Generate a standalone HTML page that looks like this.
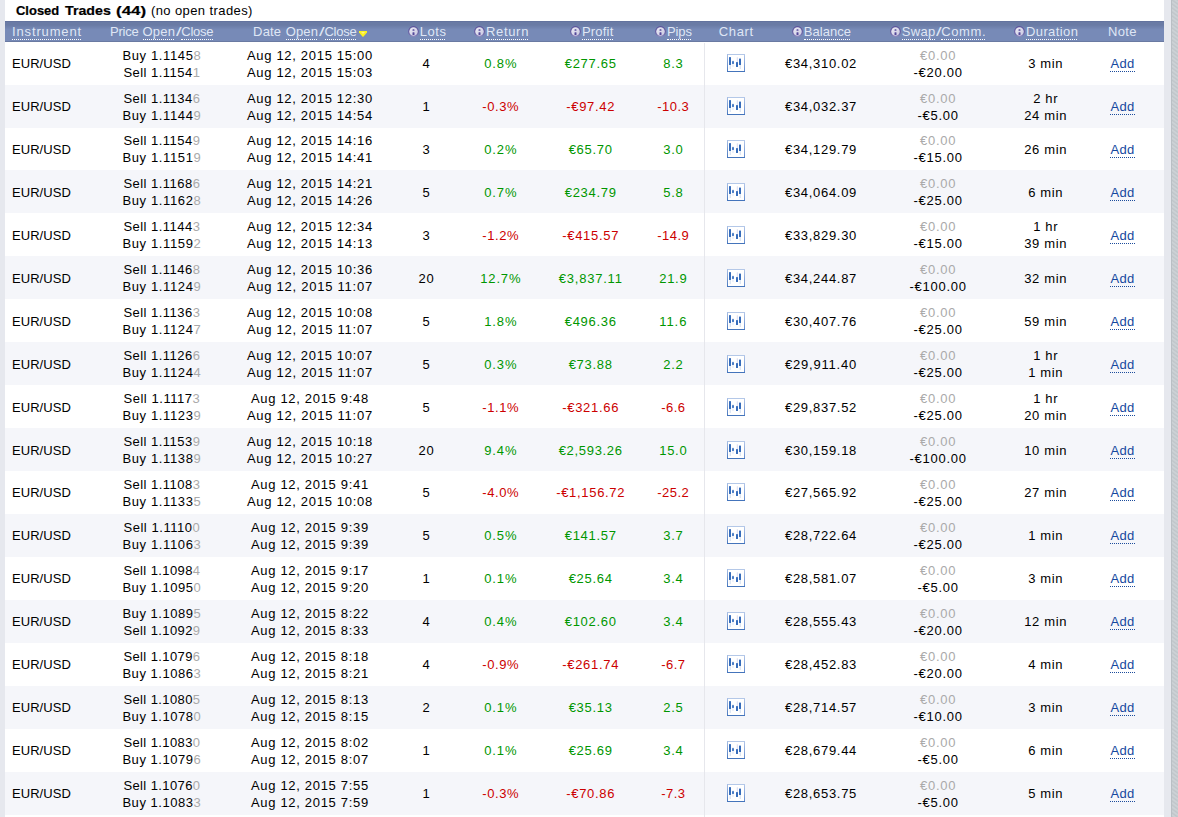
<!DOCTYPE html>
<html><head><meta charset="utf-8"><title>Closed Trades</title>
<style>
html,body{margin:0;padding:0;background:#fff;}
body{width:1178px;height:817px;overflow:hidden;font-family:"Liberation Sans",sans-serif;font-size:13px;color:#000;}
#page{position:relative;width:1178px;height:817px;overflow:hidden;background:#fff;}
.lband{position:absolute;left:0;top:0;width:5px;height:817px;background:#e6e8ee;}
.rband{position:absolute;left:1164px;top:0;width:7px;height:817px;background:#e6e8ee;}
.rhatch{position:absolute;left:1171px;top:0;width:7px;height:817px;background:repeating-linear-gradient(36deg,#bfc5c9 0,#cdd2d6 1.6px,#cdd2d6 2px,#bfc5c9 3.24px);border-left:1px solid #b9bfc4;box-sizing:border-box;}
.title{position:absolute;top:2px;line-height:17px;font-size:13px;white-space:nowrap;}
.title b{font-weight:bold;-webkit-text-stroke:.2px #000;display:inline-block;transform-origin:0 50%;}
.head{position:absolute;left:0;top:21px;width:1178px;height:21px;}
.head:before{content:"";position:absolute;left:5px;top:0;width:1159px;height:21px;background:linear-gradient(#63739e 0,#63739e 1px,#6a7ba5 1px,#6a7ba5 4px,#778ab7 8.5px,#778ab7 20px,#6a7aa2 20px,#6a7aa2 21px);}
.h{position:absolute;top:2px;height:17px;line-height:17px;color:#dfe6f5;white-space:nowrap;font-size:13px;}
.ul{position:absolute;top:18px;height:0;border-top:1px dotted #fff;}
.hic{position:absolute;top:5px;width:11px;height:11px;}
.inf{display:block;}
.arr{position:absolute;top:10px;width:8px;height:6px;}
.row{position:absolute;left:5px;width:1159px;height:43px;background:#fff;}
.row.alt{background:#f5f6fa;}
.c{position:absolute;top:0;height:43px;display:flex;align-items:center;justify-content:center;text-align:center;line-height:17px;white-space:nowrap;margin-left:-5px;}
.c.inst{left:12px;justify-content:flex-start;}
.c i{font-style:normal;color:#aaa;}
.grn{color:#009600;}
.red{color:#cc0000;}
.ci{display:block;}
.c.chart{display:block;}
.c.chart>div{position:absolute;left:11px;top:12px;}
.add{color:#15489e;border-bottom:1px dotted #1c4c9c;display:inline-block;line-height:15px;}
.vline{position:absolute;left:704px;top:43px;width:1px;height:774px;background:#e6e7ec;}
.row.r42,.row.r42 .c{height:42px;}
.row.dn .c.one{top:1px;}
.h.sl{transform:scaleX(1.55);transform-origin:50% 50%;}

</style></head><body>
<div id="page">
<div class="lband"></div><div class="rband"></div><div class="rhatch"></div>
<div class="title" style="left:15.8px"><b style="transform:scaleX(0.997)">Closed</b></div>
<div class="title" style="left:65.1px"><b style="transform:scaleX(1.093)">Trades</b></div>
<div class="title" style="left:115.5px"><b style="transform:scaleX(1.300)">(44)</b></div>
<div class="title" style="left:150.9px"><span style="letter-spacing:0.41px">(no open trades)</span></div>
<div class="head">
<div class="h u" style="left:12.0px;letter-spacing:0.86px">Instrument</div>
<div class="ul" style="left:12.1px;width:68.6px"></div>
<div class="h" style="left:110.0px;letter-spacing:-0.23px">Price</div>
<div class="h u" style="left:142.6px;letter-spacing:0.16px">Open</div>
<div class="ul" style="left:142.7px;width:31.7px"></div>
<div class="h sl" style="left:176.6px;letter-spacing:0.00px">/</div>
<div class="h u" style="left:181.3px;letter-spacing:-0.24px">Close</div>
<div class="ul" style="left:181.4px;width:31.7px"></div>
<div class="h" style="left:253.1px;letter-spacing:0.18px">Date</div>
<div class="h u" style="left:285.7px;letter-spacing:0.16px">Open</div>
<div class="ul" style="left:285.8px;width:31.7px"></div>
<div class="h sl" style="left:319.7px;letter-spacing:0.00px">/</div>
<div class="h u" style="left:324.4px;letter-spacing:-0.24px">Close</div>
<div class="ul" style="left:324.5px;width:31.7px"></div>
<svg class="arr" style="left:359px" viewBox="0 0 8 6"><polygon points="0,0 8,0 8,1.6 4.4,5.8 3.6,5.8 0,1.6" fill="#fbf31c"/><polygon points="2,1 6,1 4,3" fill="#fdf08a"/></svg>
<div class="hic" style="left:407.9px"><svg class="inf" viewBox="0 0 11 11" width="11" height="11"><defs><linearGradient id="ig" x1="0" y1="0" x2="1" y2="1"><stop offset="0" stop-color="#ececf5"/><stop offset="1" stop-color="#c9c7e0"/></linearGradient><linearGradient id="ir" x1="0" y1="0" x2="0" y2="1"><stop offset="0" stop-color="#5b519a"/><stop offset=".7" stop-color="#6a62a6"/><stop offset="1" stop-color="#8f8cc0"/></linearGradient></defs><circle cx="5.5" cy="5.5" r="5.4" fill="url(#ir)"/><circle cx="5.5" cy="5.5" r="4.25" fill="url(#ig)"/><rect x="4.5" y="6.2" width="2" height="2.8" rx=".5" fill="#55489a"/><rect x="4.5" y="3.2" width="2" height="1.6" rx=".6" fill="#55489a"/></svg></div>
<div class="h u" style="left:419.7px;letter-spacing:0.54px">Lots</div>
<div class="ul" style="left:419.8px;width:25.6px"></div>
<div class="hic" style="left:474.0px"><svg class="inf" viewBox="0 0 11 11" width="11" height="11"><defs><linearGradient id="ig" x1="0" y1="0" x2="1" y2="1"><stop offset="0" stop-color="#ececf5"/><stop offset="1" stop-color="#c9c7e0"/></linearGradient><linearGradient id="ir" x1="0" y1="0" x2="0" y2="1"><stop offset="0" stop-color="#5b519a"/><stop offset=".7" stop-color="#6a62a6"/><stop offset="1" stop-color="#8f8cc0"/></linearGradient></defs><circle cx="5.5" cy="5.5" r="5.4" fill="url(#ir)"/><circle cx="5.5" cy="5.5" r="4.25" fill="url(#ig)"/><rect x="4.5" y="6.2" width="2" height="2.8" rx=".5" fill="#55489a"/><rect x="4.5" y="3.2" width="2" height="1.6" rx=".6" fill="#55489a"/></svg></div>
<div class="h u" style="left:485.9px;letter-spacing:0.69px">Return</div>
<div class="ul" style="left:486.0px;width:41.9px"></div>
<div class="hic" style="left:570.0px"><svg class="inf" viewBox="0 0 11 11" width="11" height="11"><defs><linearGradient id="ig" x1="0" y1="0" x2="1" y2="1"><stop offset="0" stop-color="#ececf5"/><stop offset="1" stop-color="#c9c7e0"/></linearGradient><linearGradient id="ir" x1="0" y1="0" x2="0" y2="1"><stop offset="0" stop-color="#5b519a"/><stop offset=".7" stop-color="#6a62a6"/><stop offset="1" stop-color="#8f8cc0"/></linearGradient></defs><circle cx="5.5" cy="5.5" r="5.4" fill="url(#ir)"/><circle cx="5.5" cy="5.5" r="4.25" fill="url(#ig)"/><rect x="4.5" y="6.2" width="2" height="2.8" rx=".5" fill="#55489a"/><rect x="4.5" y="3.2" width="2" height="1.6" rx=".6" fill="#55489a"/></svg></div>
<div class="h u" style="left:581.9px;letter-spacing:0.21px">Profit</div>
<div class="ul" style="left:582.0px;width:30.8px"></div>
<div class="hic" style="left:655.0px"><svg class="inf" viewBox="0 0 11 11" width="11" height="11"><defs><linearGradient id="ig" x1="0" y1="0" x2="1" y2="1"><stop offset="0" stop-color="#ececf5"/><stop offset="1" stop-color="#c9c7e0"/></linearGradient><linearGradient id="ir" x1="0" y1="0" x2="0" y2="1"><stop offset="0" stop-color="#5b519a"/><stop offset=".7" stop-color="#6a62a6"/><stop offset="1" stop-color="#8f8cc0"/></linearGradient></defs><circle cx="5.5" cy="5.5" r="5.4" fill="url(#ir)"/><circle cx="5.5" cy="5.5" r="4.25" fill="url(#ig)"/><rect x="4.5" y="6.2" width="2" height="2.8" rx=".5" fill="#55489a"/><rect x="4.5" y="3.2" width="2" height="1.6" rx=".6" fill="#55489a"/></svg></div>
<div class="h u" style="left:666.9px;letter-spacing:-0.10px">Pips</div>
<div class="ul" style="left:667.0px;width:24.4px"></div>
<div class="h" style="left:718.8px;letter-spacing:0.63px">Chart</div>
<div class="hic" style="left:791.9px"><svg class="inf" viewBox="0 0 11 11" width="11" height="11"><defs><linearGradient id="ig" x1="0" y1="0" x2="1" y2="1"><stop offset="0" stop-color="#ececf5"/><stop offset="1" stop-color="#c9c7e0"/></linearGradient><linearGradient id="ir" x1="0" y1="0" x2="0" y2="1"><stop offset="0" stop-color="#5b519a"/><stop offset=".7" stop-color="#6a62a6"/><stop offset="1" stop-color="#8f8cc0"/></linearGradient></defs><circle cx="5.5" cy="5.5" r="5.4" fill="url(#ir)"/><circle cx="5.5" cy="5.5" r="4.25" fill="url(#ig)"/><rect x="4.5" y="6.2" width="2" height="2.8" rx=".5" fill="#55489a"/><rect x="4.5" y="3.2" width="2" height="1.6" rx=".6" fill="#55489a"/></svg></div>
<div class="h u" style="left:803.8px;letter-spacing:0.02px">Balance</div>
<div class="ul" style="left:803.9px;width:46.5px"></div>
<div class="hic" style="left:889.9px"><svg class="inf" viewBox="0 0 11 11" width="11" height="11"><defs><linearGradient id="ig" x1="0" y1="0" x2="1" y2="1"><stop offset="0" stop-color="#ececf5"/><stop offset="1" stop-color="#c9c7e0"/></linearGradient><linearGradient id="ir" x1="0" y1="0" x2="0" y2="1"><stop offset="0" stop-color="#5b519a"/><stop offset=".7" stop-color="#6a62a6"/><stop offset="1" stop-color="#8f8cc0"/></linearGradient></defs><circle cx="5.5" cy="5.5" r="5.4" fill="url(#ir)"/><circle cx="5.5" cy="5.5" r="4.25" fill="url(#ig)"/><rect x="4.5" y="6.2" width="2" height="2.8" rx=".5" fill="#55489a"/><rect x="4.5" y="3.2" width="2" height="1.6" rx=".6" fill="#55489a"/></svg></div>
<div class="h u" style="left:901.8px;letter-spacing:0.29px">Swap</div>
<div class="ul" style="left:901.9px;width:32.8px"></div>
<div class="h sl" style="left:936.7px;letter-spacing:0.00px">/</div>
<div class="h u" style="left:941.3px;letter-spacing:0.58px">Comm.</div>
<div class="ul" style="left:941.4px;width:43.6px"></div>
<div class="hic" style="left:1014.1px"><svg class="inf" viewBox="0 0 11 11" width="11" height="11"><defs><linearGradient id="ig" x1="0" y1="0" x2="1" y2="1"><stop offset="0" stop-color="#ececf5"/><stop offset="1" stop-color="#c9c7e0"/></linearGradient><linearGradient id="ir" x1="0" y1="0" x2="0" y2="1"><stop offset="0" stop-color="#5b519a"/><stop offset=".7" stop-color="#6a62a6"/><stop offset="1" stop-color="#8f8cc0"/></linearGradient></defs><circle cx="5.5" cy="5.5" r="5.4" fill="url(#ir)"/><circle cx="5.5" cy="5.5" r="4.25" fill="url(#ig)"/><rect x="4.5" y="6.2" width="2" height="2.8" rx=".5" fill="#55489a"/><rect x="4.5" y="3.2" width="2" height="1.6" rx=".6" fill="#55489a"/></svg></div>
<div class="h u" style="left:1026.0px;letter-spacing:0.39px">Duration</div>
<div class="ul" style="left:1026.1px;width:51.3px"></div>
<div class="h" style="left:1107.9px;letter-spacing:0.41px">Note</div>
</div>
<div class="row" style="top:42px">
<div class="c inst one"><div><span style="letter-spacing:0.05px">EUR/USD</span></div></div>
<div class="c price" style="left:81.9px;width:160px"><div><span style="letter-spacing:0.63px">Buy 1.1145<i>8</i></span><br><span style="letter-spacing:0.47px">Sell 1.1154<i>1</i></span></div></div>
<div class="c date" style="left:229.9px;width:160px"><div><span style="letter-spacing:0.69px">Aug 12, 2015 15:00</span><br><span style="letter-spacing:0.69px">Aug 12, 2015 15:03</span></div></div>
<div class="c num one" style="left:346.4px;width:160px"><div><span style="letter-spacing:0.77px">4</span></div></div>
<div class="c grn one" style="left:420.8px;width:160px"><div><span style="letter-spacing:0.84px">0.8%</span></div></div>
<div class="c grn one" style="left:510.7px;width:160px"><div><span style="letter-spacing:0.71px">€277.65</span></div></div>
<div class="c grn one" style="left:593.3px;width:160px"><div><span style="letter-spacing:0.64px">8.3</span></div></div>
<div class="c chart one" style="left:716.0px;width:40px"><div><svg class="ci" viewBox="0 0 18 18" width="18" height="18"><defs><linearGradient id="cl" x1="0" y1="0" x2="0" y2="1"><stop offset="0" stop-color="#a9c0e6"/><stop offset="1" stop-color="#4676bd"/></linearGradient><linearGradient id="cr" x1="0" y1="0" x2="0" y2="1"><stop offset="0" stop-color="#b6c9ea"/><stop offset="1" stop-color="#5f88cc"/></linearGradient></defs><rect x="0" y="0" width="18" height="18" fill="#fff"/><rect x="0" y="0" width="18" height="1" fill="#b4c8e8"/><rect x="0" y="0" width="1" height="18" fill="url(#cl)"/><rect x="17" y="0" width="1" height="18" fill="url(#cr)"/><rect x="0" y="17" width="18" height="1" fill="#4474bb"/><rect x="2.7" y="10" width="1" height="5" fill="#cfdcf0"/><rect x="2" y="3" width="2" height="8" rx=".6" fill="#366cbb"/><rect x="5.5" y="6" width="1" height="7" fill="#dde6f5"/><rect x="5" y="7" width="2" height="3" rx=".4" fill="#4a7cc4"/><rect x="9.8" y="3.3" width="1" height="5" fill="#d6d9f0"/><rect x="9" y="8" width="2" height="5" rx=".5" fill="#366cbb"/><rect x="12.7" y="10" width="1" height="5" fill="#cfdcf0"/><rect x="12" y="4.5" width="2" height="6.5" rx=".6" fill="#366cbb"/></svg></div></div>
<div class="c num one" style="left:741.0px;width:160px"><div><span style="letter-spacing:0.69px">€34,310.02</span></div></div>
<div class="c num" style="left:858.1px;width:160px"><div><i><span style="letter-spacing:0.69px">€0.00</span></i><br><span style="letter-spacing:0.70px">-€20.00</span></div></div>
<div class="c dur one" style="left:965.7px;width:160px"><div><span style="letter-spacing:0.64px">3 min</span></div></div>
<div class="c note one" style="left:1092.5px;width:60px"><div><span class="add"><span style="letter-spacing:0.29px">Add</span></span></div></div>
</div>
<div class="row alt" style="top:85px">
<div class="c inst one"><div><span style="letter-spacing:0.05px">EUR/USD</span></div></div>
<div class="c price" style="left:81.9px;width:160px"><div><span style="letter-spacing:0.47px">Sell 1.1134<i>6</i></span><br><span style="letter-spacing:0.63px">Buy 1.1144<i>9</i></span></div></div>
<div class="c date" style="left:229.9px;width:160px"><div><span style="letter-spacing:0.69px">Aug 12, 2015 12:30</span><br><span style="letter-spacing:0.69px">Aug 12, 2015 14:54</span></div></div>
<div class="c num one" style="left:346.4px;width:160px"><div><span style="letter-spacing:0.77px">1</span></div></div>
<div class="c red one" style="left:420.8px;width:160px"><div><span style="letter-spacing:0.61px">-0.3%</span></div></div>
<div class="c red one" style="left:510.7px;width:160px"><div><span style="letter-spacing:0.70px">-€97.42</span></div></div>
<div class="c red one" style="left:593.3px;width:160px"><div><span style="letter-spacing:0.47px">-10.3</span></div></div>
<div class="c chart one" style="left:716.0px;width:40px"><div><svg class="ci" viewBox="0 0 18 18" width="18" height="18"><defs><linearGradient id="cl" x1="0" y1="0" x2="0" y2="1"><stop offset="0" stop-color="#a9c0e6"/><stop offset="1" stop-color="#4676bd"/></linearGradient><linearGradient id="cr" x1="0" y1="0" x2="0" y2="1"><stop offset="0" stop-color="#b6c9ea"/><stop offset="1" stop-color="#5f88cc"/></linearGradient></defs><rect x="0" y="0" width="18" height="18" fill="#fff"/><rect x="0" y="0" width="18" height="1" fill="#b4c8e8"/><rect x="0" y="0" width="1" height="18" fill="url(#cl)"/><rect x="17" y="0" width="1" height="18" fill="url(#cr)"/><rect x="0" y="17" width="18" height="1" fill="#4474bb"/><rect x="2.7" y="10" width="1" height="5" fill="#cfdcf0"/><rect x="2" y="3" width="2" height="8" rx=".6" fill="#366cbb"/><rect x="5.5" y="6" width="1" height="7" fill="#dde6f5"/><rect x="5" y="7" width="2" height="3" rx=".4" fill="#4a7cc4"/><rect x="9.8" y="3.3" width="1" height="5" fill="#d6d9f0"/><rect x="9" y="8" width="2" height="5" rx=".5" fill="#366cbb"/><rect x="12.7" y="10" width="1" height="5" fill="#cfdcf0"/><rect x="12" y="4.5" width="2" height="6.5" rx=".6" fill="#366cbb"/></svg></div></div>
<div class="c num one" style="left:741.0px;width:160px"><div><span style="letter-spacing:0.69px">€34,032.37</span></div></div>
<div class="c num" style="left:858.1px;width:160px"><div><i><span style="letter-spacing:0.69px">€0.00</span></i><br><span style="letter-spacing:0.69px">-€5.00</span></div></div>
<div class="c dur" style="left:965.7px;width:160px"><div><span style="letter-spacing:0.65px">2 hr</span><br><span style="letter-spacing:0.66px">24 min</span></div></div>
<div class="c note one" style="left:1092.5px;width:60px"><div><span class="add"><span style="letter-spacing:0.29px">Add</span></span></div></div>
</div>
<div class="row r42" style="top:128px">
<div class="c inst one"><div><span style="letter-spacing:0.05px">EUR/USD</span></div></div>
<div class="c price" style="left:81.9px;width:160px"><div><span style="letter-spacing:0.47px">Sell 1.1154<i>9</i></span><br><span style="letter-spacing:0.63px">Buy 1.1151<i>9</i></span></div></div>
<div class="c date" style="left:229.9px;width:160px"><div><span style="letter-spacing:0.69px">Aug 12, 2015 14:16</span><br><span style="letter-spacing:0.69px">Aug 12, 2015 14:41</span></div></div>
<div class="c num one" style="left:346.4px;width:160px"><div><span style="letter-spacing:0.77px">3</span></div></div>
<div class="c grn one" style="left:420.8px;width:160px"><div><span style="letter-spacing:0.84px">0.2%</span></div></div>
<div class="c grn one" style="left:510.7px;width:160px"><div><span style="letter-spacing:0.71px">€65.70</span></div></div>
<div class="c grn one" style="left:593.3px;width:160px"><div><span style="letter-spacing:0.64px">3.0</span></div></div>
<div class="c chart one" style="left:716.0px;width:40px"><div><svg class="ci" viewBox="0 0 18 18" width="18" height="18"><defs><linearGradient id="cl" x1="0" y1="0" x2="0" y2="1"><stop offset="0" stop-color="#a9c0e6"/><stop offset="1" stop-color="#4676bd"/></linearGradient><linearGradient id="cr" x1="0" y1="0" x2="0" y2="1"><stop offset="0" stop-color="#b6c9ea"/><stop offset="1" stop-color="#5f88cc"/></linearGradient></defs><rect x="0" y="0" width="18" height="18" fill="#fff"/><rect x="0" y="0" width="18" height="1" fill="#b4c8e8"/><rect x="0" y="0" width="1" height="18" fill="url(#cl)"/><rect x="17" y="0" width="1" height="18" fill="url(#cr)"/><rect x="0" y="17" width="18" height="1" fill="#4474bb"/><rect x="2.7" y="10" width="1" height="5" fill="#cfdcf0"/><rect x="2" y="3" width="2" height="8" rx=".6" fill="#366cbb"/><rect x="5.5" y="6" width="1" height="7" fill="#dde6f5"/><rect x="5" y="7" width="2" height="3" rx=".4" fill="#4a7cc4"/><rect x="9.8" y="3.3" width="1" height="5" fill="#d6d9f0"/><rect x="9" y="8" width="2" height="5" rx=".5" fill="#366cbb"/><rect x="12.7" y="10" width="1" height="5" fill="#cfdcf0"/><rect x="12" y="4.5" width="2" height="6.5" rx=".6" fill="#366cbb"/></svg></div></div>
<div class="c num one" style="left:741.0px;width:160px"><div><span style="letter-spacing:0.69px">€34,129.79</span></div></div>
<div class="c num" style="left:858.1px;width:160px"><div><i><span style="letter-spacing:0.69px">€0.00</span></i><br><span style="letter-spacing:0.70px">-€15.00</span></div></div>
<div class="c dur one" style="left:965.7px;width:160px"><div><span style="letter-spacing:0.66px">26 min</span></div></div>
<div class="c note one" style="left:1092.5px;width:60px"><div><span class="add"><span style="letter-spacing:0.29px">Add</span></span></div></div>
</div>
<div class="row alt dn" style="top:170px">
<div class="c inst one"><div><span style="letter-spacing:0.05px">EUR/USD</span></div></div>
<div class="c price" style="left:81.9px;width:160px"><div><span style="letter-spacing:0.47px">Sell 1.1168<i>6</i></span><br><span style="letter-spacing:0.63px">Buy 1.1162<i>8</i></span></div></div>
<div class="c date" style="left:229.9px;width:160px"><div><span style="letter-spacing:0.69px">Aug 12, 2015 14:21</span><br><span style="letter-spacing:0.69px">Aug 12, 2015 14:26</span></div></div>
<div class="c num one" style="left:346.4px;width:160px"><div><span style="letter-spacing:0.77px">5</span></div></div>
<div class="c grn one" style="left:420.8px;width:160px"><div><span style="letter-spacing:0.84px">0.7%</span></div></div>
<div class="c grn one" style="left:510.7px;width:160px"><div><span style="letter-spacing:0.71px">€234.79</span></div></div>
<div class="c grn one" style="left:593.3px;width:160px"><div><span style="letter-spacing:0.64px">5.8</span></div></div>
<div class="c chart one" style="left:716.0px;width:40px"><div><svg class="ci" viewBox="0 0 18 18" width="18" height="18"><defs><linearGradient id="cl" x1="0" y1="0" x2="0" y2="1"><stop offset="0" stop-color="#a9c0e6"/><stop offset="1" stop-color="#4676bd"/></linearGradient><linearGradient id="cr" x1="0" y1="0" x2="0" y2="1"><stop offset="0" stop-color="#b6c9ea"/><stop offset="1" stop-color="#5f88cc"/></linearGradient></defs><rect x="0" y="0" width="18" height="18" fill="#fff"/><rect x="0" y="0" width="18" height="1" fill="#b4c8e8"/><rect x="0" y="0" width="1" height="18" fill="url(#cl)"/><rect x="17" y="0" width="1" height="18" fill="url(#cr)"/><rect x="0" y="17" width="18" height="1" fill="#4474bb"/><rect x="2.7" y="10" width="1" height="5" fill="#cfdcf0"/><rect x="2" y="3" width="2" height="8" rx=".6" fill="#366cbb"/><rect x="5.5" y="6" width="1" height="7" fill="#dde6f5"/><rect x="5" y="7" width="2" height="3" rx=".4" fill="#4a7cc4"/><rect x="9.8" y="3.3" width="1" height="5" fill="#d6d9f0"/><rect x="9" y="8" width="2" height="5" rx=".5" fill="#366cbb"/><rect x="12.7" y="10" width="1" height="5" fill="#cfdcf0"/><rect x="12" y="4.5" width="2" height="6.5" rx=".6" fill="#366cbb"/></svg></div></div>
<div class="c num one" style="left:741.0px;width:160px"><div><span style="letter-spacing:0.69px">€34,064.09</span></div></div>
<div class="c num" style="left:858.1px;width:160px"><div><i><span style="letter-spacing:0.69px">€0.00</span></i><br><span style="letter-spacing:0.70px">-€25.00</span></div></div>
<div class="c dur one" style="left:965.7px;width:160px"><div><span style="letter-spacing:0.64px">6 min</span></div></div>
<div class="c note one" style="left:1092.5px;width:60px"><div><span class="add"><span style="letter-spacing:0.29px">Add</span></span></div></div>
</div>
<div class="row dn" style="top:213px">
<div class="c inst one"><div><span style="letter-spacing:0.05px">EUR/USD</span></div></div>
<div class="c price" style="left:81.9px;width:160px"><div><span style="letter-spacing:0.47px">Sell 1.1144<i>3</i></span><br><span style="letter-spacing:0.63px">Buy 1.1159<i>2</i></span></div></div>
<div class="c date" style="left:229.9px;width:160px"><div><span style="letter-spacing:0.69px">Aug 12, 2015 12:34</span><br><span style="letter-spacing:0.69px">Aug 12, 2015 14:13</span></div></div>
<div class="c num one" style="left:346.4px;width:160px"><div><span style="letter-spacing:0.77px">3</span></div></div>
<div class="c red one" style="left:420.8px;width:160px"><div><span style="letter-spacing:0.61px">-1.2%</span></div></div>
<div class="c red one" style="left:510.7px;width:160px"><div><span style="letter-spacing:0.71px">-€415.57</span></div></div>
<div class="c red one" style="left:593.3px;width:160px"><div><span style="letter-spacing:0.47px">-14.9</span></div></div>
<div class="c chart one" style="left:716.0px;width:40px"><div><svg class="ci" viewBox="0 0 18 18" width="18" height="18"><defs><linearGradient id="cl" x1="0" y1="0" x2="0" y2="1"><stop offset="0" stop-color="#a9c0e6"/><stop offset="1" stop-color="#4676bd"/></linearGradient><linearGradient id="cr" x1="0" y1="0" x2="0" y2="1"><stop offset="0" stop-color="#b6c9ea"/><stop offset="1" stop-color="#5f88cc"/></linearGradient></defs><rect x="0" y="0" width="18" height="18" fill="#fff"/><rect x="0" y="0" width="18" height="1" fill="#b4c8e8"/><rect x="0" y="0" width="1" height="18" fill="url(#cl)"/><rect x="17" y="0" width="1" height="18" fill="url(#cr)"/><rect x="0" y="17" width="18" height="1" fill="#4474bb"/><rect x="2.7" y="10" width="1" height="5" fill="#cfdcf0"/><rect x="2" y="3" width="2" height="8" rx=".6" fill="#366cbb"/><rect x="5.5" y="6" width="1" height="7" fill="#dde6f5"/><rect x="5" y="7" width="2" height="3" rx=".4" fill="#4a7cc4"/><rect x="9.8" y="3.3" width="1" height="5" fill="#d6d9f0"/><rect x="9" y="8" width="2" height="5" rx=".5" fill="#366cbb"/><rect x="12.7" y="10" width="1" height="5" fill="#cfdcf0"/><rect x="12" y="4.5" width="2" height="6.5" rx=".6" fill="#366cbb"/></svg></div></div>
<div class="c num one" style="left:741.0px;width:160px"><div><span style="letter-spacing:0.69px">€33,829.30</span></div></div>
<div class="c num" style="left:858.1px;width:160px"><div><i><span style="letter-spacing:0.69px">€0.00</span></i><br><span style="letter-spacing:0.70px">-€15.00</span></div></div>
<div class="c dur" style="left:965.7px;width:160px"><div><span style="letter-spacing:0.65px">1 hr</span><br><span style="letter-spacing:0.66px">39 min</span></div></div>
<div class="c note one" style="left:1092.5px;width:60px"><div><span class="add"><span style="letter-spacing:0.29px">Add</span></span></div></div>
</div>
<div class="row alt dn" style="top:256px">
<div class="c inst one"><div><span style="letter-spacing:0.05px">EUR/USD</span></div></div>
<div class="c price" style="left:81.9px;width:160px"><div><span style="letter-spacing:0.47px">Sell 1.1146<i>8</i></span><br><span style="letter-spacing:0.63px">Buy 1.1124<i>9</i></span></div></div>
<div class="c date" style="left:229.9px;width:160px"><div><span style="letter-spacing:0.69px">Aug 12, 2015 10:36</span><br><span style="letter-spacing:0.75px">Aug 12, 2015 11:07</span></div></div>
<div class="c num one" style="left:346.4px;width:160px"><div><span style="letter-spacing:0.77px">20</span></div></div>
<div class="c grn one" style="left:420.8px;width:160px"><div><span style="letter-spacing:0.82px">12.7%</span></div></div>
<div class="c grn one" style="left:510.7px;width:160px"><div><span style="letter-spacing:0.79px">€3,837.11</span></div></div>
<div class="c grn one" style="left:593.3px;width:160px"><div><span style="letter-spacing:0.67px">21.9</span></div></div>
<div class="c chart one" style="left:716.0px;width:40px"><div><svg class="ci" viewBox="0 0 18 18" width="18" height="18"><defs><linearGradient id="cl" x1="0" y1="0" x2="0" y2="1"><stop offset="0" stop-color="#a9c0e6"/><stop offset="1" stop-color="#4676bd"/></linearGradient><linearGradient id="cr" x1="0" y1="0" x2="0" y2="1"><stop offset="0" stop-color="#b6c9ea"/><stop offset="1" stop-color="#5f88cc"/></linearGradient></defs><rect x="0" y="0" width="18" height="18" fill="#fff"/><rect x="0" y="0" width="18" height="1" fill="#b4c8e8"/><rect x="0" y="0" width="1" height="18" fill="url(#cl)"/><rect x="17" y="0" width="1" height="18" fill="url(#cr)"/><rect x="0" y="17" width="18" height="1" fill="#4474bb"/><rect x="2.7" y="10" width="1" height="5" fill="#cfdcf0"/><rect x="2" y="3" width="2" height="8" rx=".6" fill="#366cbb"/><rect x="5.5" y="6" width="1" height="7" fill="#dde6f5"/><rect x="5" y="7" width="2" height="3" rx=".4" fill="#4a7cc4"/><rect x="9.8" y="3.3" width="1" height="5" fill="#d6d9f0"/><rect x="9" y="8" width="2" height="5" rx=".5" fill="#366cbb"/><rect x="12.7" y="10" width="1" height="5" fill="#cfdcf0"/><rect x="12" y="4.5" width="2" height="6.5" rx=".6" fill="#366cbb"/></svg></div></div>
<div class="c num one" style="left:741.0px;width:160px"><div><span style="letter-spacing:0.69px">€34,244.87</span></div></div>
<div class="c num" style="left:858.1px;width:160px"><div><i><span style="letter-spacing:0.69px">€0.00</span></i><br><span style="letter-spacing:0.71px">-€100.00</span></div></div>
<div class="c dur one" style="left:965.7px;width:160px"><div><span style="letter-spacing:0.66px">32 min</span></div></div>
<div class="c note one" style="left:1092.5px;width:60px"><div><span class="add"><span style="letter-spacing:0.29px">Add</span></span></div></div>
</div>
<div class="row dn" style="top:299px">
<div class="c inst one"><div><span style="letter-spacing:0.05px">EUR/USD</span></div></div>
<div class="c price" style="left:81.9px;width:160px"><div><span style="letter-spacing:0.47px">Sell 1.1136<i>3</i></span><br><span style="letter-spacing:0.63px">Buy 1.1124<i>7</i></span></div></div>
<div class="c date" style="left:229.9px;width:160px"><div><span style="letter-spacing:0.69px">Aug 12, 2015 10:08</span><br><span style="letter-spacing:0.75px">Aug 12, 2015 11:07</span></div></div>
<div class="c num one" style="left:346.4px;width:160px"><div><span style="letter-spacing:0.77px">5</span></div></div>
<div class="c grn one" style="left:420.8px;width:160px"><div><span style="letter-spacing:0.84px">1.8%</span></div></div>
<div class="c grn one" style="left:510.7px;width:160px"><div><span style="letter-spacing:0.71px">€496.36</span></div></div>
<div class="c grn one" style="left:593.3px;width:160px"><div><span style="letter-spacing:0.91px">11.6</span></div></div>
<div class="c chart one" style="left:716.0px;width:40px"><div><svg class="ci" viewBox="0 0 18 18" width="18" height="18"><defs><linearGradient id="cl" x1="0" y1="0" x2="0" y2="1"><stop offset="0" stop-color="#a9c0e6"/><stop offset="1" stop-color="#4676bd"/></linearGradient><linearGradient id="cr" x1="0" y1="0" x2="0" y2="1"><stop offset="0" stop-color="#b6c9ea"/><stop offset="1" stop-color="#5f88cc"/></linearGradient></defs><rect x="0" y="0" width="18" height="18" fill="#fff"/><rect x="0" y="0" width="18" height="1" fill="#b4c8e8"/><rect x="0" y="0" width="1" height="18" fill="url(#cl)"/><rect x="17" y="0" width="1" height="18" fill="url(#cr)"/><rect x="0" y="17" width="18" height="1" fill="#4474bb"/><rect x="2.7" y="10" width="1" height="5" fill="#cfdcf0"/><rect x="2" y="3" width="2" height="8" rx=".6" fill="#366cbb"/><rect x="5.5" y="6" width="1" height="7" fill="#dde6f5"/><rect x="5" y="7" width="2" height="3" rx=".4" fill="#4a7cc4"/><rect x="9.8" y="3.3" width="1" height="5" fill="#d6d9f0"/><rect x="9" y="8" width="2" height="5" rx=".5" fill="#366cbb"/><rect x="12.7" y="10" width="1" height="5" fill="#cfdcf0"/><rect x="12" y="4.5" width="2" height="6.5" rx=".6" fill="#366cbb"/></svg></div></div>
<div class="c num one" style="left:741.0px;width:160px"><div><span style="letter-spacing:0.69px">€30,407.76</span></div></div>
<div class="c num" style="left:858.1px;width:160px"><div><i><span style="letter-spacing:0.69px">€0.00</span></i><br><span style="letter-spacing:0.70px">-€25.00</span></div></div>
<div class="c dur one" style="left:965.7px;width:160px"><div><span style="letter-spacing:0.66px">59 min</span></div></div>
<div class="c note one" style="left:1092.5px;width:60px"><div><span class="add"><span style="letter-spacing:0.29px">Add</span></span></div></div>
</div>
<div class="row alt dn" style="top:342px">
<div class="c inst one"><div><span style="letter-spacing:0.05px">EUR/USD</span></div></div>
<div class="c price" style="left:81.9px;width:160px"><div><span style="letter-spacing:0.47px">Sell 1.1126<i>6</i></span><br><span style="letter-spacing:0.63px">Buy 1.1124<i>4</i></span></div></div>
<div class="c date" style="left:229.9px;width:160px"><div><span style="letter-spacing:0.69px">Aug 12, 2015 10:07</span><br><span style="letter-spacing:0.75px">Aug 12, 2015 11:07</span></div></div>
<div class="c num one" style="left:346.4px;width:160px"><div><span style="letter-spacing:0.77px">5</span></div></div>
<div class="c grn one" style="left:420.8px;width:160px"><div><span style="letter-spacing:0.84px">0.3%</span></div></div>
<div class="c grn one" style="left:510.7px;width:160px"><div><span style="letter-spacing:0.71px">€73.88</span></div></div>
<div class="c grn one" style="left:593.3px;width:160px"><div><span style="letter-spacing:0.64px">2.2</span></div></div>
<div class="c chart one" style="left:716.0px;width:40px"><div><svg class="ci" viewBox="0 0 18 18" width="18" height="18"><defs><linearGradient id="cl" x1="0" y1="0" x2="0" y2="1"><stop offset="0" stop-color="#a9c0e6"/><stop offset="1" stop-color="#4676bd"/></linearGradient><linearGradient id="cr" x1="0" y1="0" x2="0" y2="1"><stop offset="0" stop-color="#b6c9ea"/><stop offset="1" stop-color="#5f88cc"/></linearGradient></defs><rect x="0" y="0" width="18" height="18" fill="#fff"/><rect x="0" y="0" width="18" height="1" fill="#b4c8e8"/><rect x="0" y="0" width="1" height="18" fill="url(#cl)"/><rect x="17" y="0" width="1" height="18" fill="url(#cr)"/><rect x="0" y="17" width="18" height="1" fill="#4474bb"/><rect x="2.7" y="10" width="1" height="5" fill="#cfdcf0"/><rect x="2" y="3" width="2" height="8" rx=".6" fill="#366cbb"/><rect x="5.5" y="6" width="1" height="7" fill="#dde6f5"/><rect x="5" y="7" width="2" height="3" rx=".4" fill="#4a7cc4"/><rect x="9.8" y="3.3" width="1" height="5" fill="#d6d9f0"/><rect x="9" y="8" width="2" height="5" rx=".5" fill="#366cbb"/><rect x="12.7" y="10" width="1" height="5" fill="#cfdcf0"/><rect x="12" y="4.5" width="2" height="6.5" rx=".6" fill="#366cbb"/></svg></div></div>
<div class="c num one" style="left:741.0px;width:160px"><div><span style="letter-spacing:0.79px">€29,911.40</span></div></div>
<div class="c num" style="left:858.1px;width:160px"><div><i><span style="letter-spacing:0.69px">€0.00</span></i><br><span style="letter-spacing:0.70px">-€25.00</span></div></div>
<div class="c dur" style="left:965.7px;width:160px"><div><span style="letter-spacing:0.65px">1 hr</span><br><span style="letter-spacing:0.64px">1 min</span></div></div>
<div class="c note one" style="left:1092.5px;width:60px"><div><span class="add"><span style="letter-spacing:0.29px">Add</span></span></div></div>
</div>
<div class="row dn" style="top:385px">
<div class="c inst one"><div><span style="letter-spacing:0.05px">EUR/USD</span></div></div>
<div class="c price" style="left:81.9px;width:160px"><div><span style="letter-spacing:0.55px">Sell 1.1117<i>3</i></span><br><span style="letter-spacing:0.63px">Buy 1.1123<i>9</i></span></div></div>
<div class="c date" style="left:229.9px;width:160px"><div><span style="letter-spacing:0.69px">Aug 12, 2015 9:48</span><br><span style="letter-spacing:0.75px">Aug 12, 2015 11:07</span></div></div>
<div class="c num one" style="left:346.4px;width:160px"><div><span style="letter-spacing:0.77px">5</span></div></div>
<div class="c red one" style="left:420.8px;width:160px"><div><span style="letter-spacing:0.61px">-1.1%</span></div></div>
<div class="c red one" style="left:510.7px;width:160px"><div><span style="letter-spacing:0.71px">-€321.66</span></div></div>
<div class="c red one" style="left:593.3px;width:160px"><div><span style="letter-spacing:0.40px">-6.6</span></div></div>
<div class="c chart one" style="left:716.0px;width:40px"><div><svg class="ci" viewBox="0 0 18 18" width="18" height="18"><defs><linearGradient id="cl" x1="0" y1="0" x2="0" y2="1"><stop offset="0" stop-color="#a9c0e6"/><stop offset="1" stop-color="#4676bd"/></linearGradient><linearGradient id="cr" x1="0" y1="0" x2="0" y2="1"><stop offset="0" stop-color="#b6c9ea"/><stop offset="1" stop-color="#5f88cc"/></linearGradient></defs><rect x="0" y="0" width="18" height="18" fill="#fff"/><rect x="0" y="0" width="18" height="1" fill="#b4c8e8"/><rect x="0" y="0" width="1" height="18" fill="url(#cl)"/><rect x="17" y="0" width="1" height="18" fill="url(#cr)"/><rect x="0" y="17" width="18" height="1" fill="#4474bb"/><rect x="2.7" y="10" width="1" height="5" fill="#cfdcf0"/><rect x="2" y="3" width="2" height="8" rx=".6" fill="#366cbb"/><rect x="5.5" y="6" width="1" height="7" fill="#dde6f5"/><rect x="5" y="7" width="2" height="3" rx=".4" fill="#4a7cc4"/><rect x="9.8" y="3.3" width="1" height="5" fill="#d6d9f0"/><rect x="9" y="8" width="2" height="5" rx=".5" fill="#366cbb"/><rect x="12.7" y="10" width="1" height="5" fill="#cfdcf0"/><rect x="12" y="4.5" width="2" height="6.5" rx=".6" fill="#366cbb"/></svg></div></div>
<div class="c num one" style="left:741.0px;width:160px"><div><span style="letter-spacing:0.69px">€29,837.52</span></div></div>
<div class="c num" style="left:858.1px;width:160px"><div><i><span style="letter-spacing:0.69px">€0.00</span></i><br><span style="letter-spacing:0.70px">-€25.00</span></div></div>
<div class="c dur" style="left:965.7px;width:160px"><div><span style="letter-spacing:0.65px">1 hr</span><br><span style="letter-spacing:0.66px">20 min</span></div></div>
<div class="c note one" style="left:1092.5px;width:60px"><div><span class="add"><span style="letter-spacing:0.29px">Add</span></span></div></div>
</div>
<div class="row alt dn" style="top:428px">
<div class="c inst one"><div><span style="letter-spacing:0.05px">EUR/USD</span></div></div>
<div class="c price" style="left:81.9px;width:160px"><div><span style="letter-spacing:0.47px">Sell 1.1153<i>9</i></span><br><span style="letter-spacing:0.63px">Buy 1.1138<i>9</i></span></div></div>
<div class="c date" style="left:229.9px;width:160px"><div><span style="letter-spacing:0.69px">Aug 12, 2015 10:18</span><br><span style="letter-spacing:0.69px">Aug 12, 2015 10:27</span></div></div>
<div class="c num one" style="left:346.4px;width:160px"><div><span style="letter-spacing:0.77px">20</span></div></div>
<div class="c grn one" style="left:420.8px;width:160px"><div><span style="letter-spacing:0.84px">9.4%</span></div></div>
<div class="c grn one" style="left:510.7px;width:160px"><div><span style="letter-spacing:0.68px">€2,593.26</span></div></div>
<div class="c grn one" style="left:593.3px;width:160px"><div><span style="letter-spacing:0.67px">15.0</span></div></div>
<div class="c chart one" style="left:716.0px;width:40px"><div><svg class="ci" viewBox="0 0 18 18" width="18" height="18"><defs><linearGradient id="cl" x1="0" y1="0" x2="0" y2="1"><stop offset="0" stop-color="#a9c0e6"/><stop offset="1" stop-color="#4676bd"/></linearGradient><linearGradient id="cr" x1="0" y1="0" x2="0" y2="1"><stop offset="0" stop-color="#b6c9ea"/><stop offset="1" stop-color="#5f88cc"/></linearGradient></defs><rect x="0" y="0" width="18" height="18" fill="#fff"/><rect x="0" y="0" width="18" height="1" fill="#b4c8e8"/><rect x="0" y="0" width="1" height="18" fill="url(#cl)"/><rect x="17" y="0" width="1" height="18" fill="url(#cr)"/><rect x="0" y="17" width="18" height="1" fill="#4474bb"/><rect x="2.7" y="10" width="1" height="5" fill="#cfdcf0"/><rect x="2" y="3" width="2" height="8" rx=".6" fill="#366cbb"/><rect x="5.5" y="6" width="1" height="7" fill="#dde6f5"/><rect x="5" y="7" width="2" height="3" rx=".4" fill="#4a7cc4"/><rect x="9.8" y="3.3" width="1" height="5" fill="#d6d9f0"/><rect x="9" y="8" width="2" height="5" rx=".5" fill="#366cbb"/><rect x="12.7" y="10" width="1" height="5" fill="#cfdcf0"/><rect x="12" y="4.5" width="2" height="6.5" rx=".6" fill="#366cbb"/></svg></div></div>
<div class="c num one" style="left:741.0px;width:160px"><div><span style="letter-spacing:0.69px">€30,159.18</span></div></div>
<div class="c num" style="left:858.1px;width:160px"><div><i><span style="letter-spacing:0.69px">€0.00</span></i><br><span style="letter-spacing:0.71px">-€100.00</span></div></div>
<div class="c dur one" style="left:965.7px;width:160px"><div><span style="letter-spacing:0.66px">10 min</span></div></div>
<div class="c note one" style="left:1092.5px;width:60px"><div><span class="add"><span style="letter-spacing:0.29px">Add</span></span></div></div>
</div>
<div class="row" style="top:471px">
<div class="c inst one"><div><span style="letter-spacing:0.05px">EUR/USD</span></div></div>
<div class="c price" style="left:81.9px;width:160px"><div><span style="letter-spacing:0.47px">Sell 1.1108<i>3</i></span><br><span style="letter-spacing:0.63px">Buy 1.1133<i>5</i></span></div></div>
<div class="c date" style="left:229.9px;width:160px"><div><span style="letter-spacing:0.69px">Aug 12, 2015 9:41</span><br><span style="letter-spacing:0.69px">Aug 12, 2015 10:08</span></div></div>
<div class="c num one" style="left:346.4px;width:160px"><div><span style="letter-spacing:0.77px">5</span></div></div>
<div class="c red one" style="left:420.8px;width:160px"><div><span style="letter-spacing:0.61px">-4.0%</span></div></div>
<div class="c red one" style="left:510.7px;width:160px"><div><span style="letter-spacing:0.68px">-€1,156.72</span></div></div>
<div class="c red one" style="left:593.3px;width:160px"><div><span style="letter-spacing:0.47px">-25.2</span></div></div>
<div class="c chart one" style="left:716.0px;width:40px"><div><svg class="ci" viewBox="0 0 18 18" width="18" height="18"><defs><linearGradient id="cl" x1="0" y1="0" x2="0" y2="1"><stop offset="0" stop-color="#a9c0e6"/><stop offset="1" stop-color="#4676bd"/></linearGradient><linearGradient id="cr" x1="0" y1="0" x2="0" y2="1"><stop offset="0" stop-color="#b6c9ea"/><stop offset="1" stop-color="#5f88cc"/></linearGradient></defs><rect x="0" y="0" width="18" height="18" fill="#fff"/><rect x="0" y="0" width="18" height="1" fill="#b4c8e8"/><rect x="0" y="0" width="1" height="18" fill="url(#cl)"/><rect x="17" y="0" width="1" height="18" fill="url(#cr)"/><rect x="0" y="17" width="18" height="1" fill="#4474bb"/><rect x="2.7" y="10" width="1" height="5" fill="#cfdcf0"/><rect x="2" y="3" width="2" height="8" rx=".6" fill="#366cbb"/><rect x="5.5" y="6" width="1" height="7" fill="#dde6f5"/><rect x="5" y="7" width="2" height="3" rx=".4" fill="#4a7cc4"/><rect x="9.8" y="3.3" width="1" height="5" fill="#d6d9f0"/><rect x="9" y="8" width="2" height="5" rx=".5" fill="#366cbb"/><rect x="12.7" y="10" width="1" height="5" fill="#cfdcf0"/><rect x="12" y="4.5" width="2" height="6.5" rx=".6" fill="#366cbb"/></svg></div></div>
<div class="c num one" style="left:741.0px;width:160px"><div><span style="letter-spacing:0.69px">€27,565.92</span></div></div>
<div class="c num" style="left:858.1px;width:160px"><div><i><span style="letter-spacing:0.69px">€0.00</span></i><br><span style="letter-spacing:0.70px">-€25.00</span></div></div>
<div class="c dur one" style="left:965.7px;width:160px"><div><span style="letter-spacing:0.66px">27 min</span></div></div>
<div class="c note one" style="left:1092.5px;width:60px"><div><span class="add"><span style="letter-spacing:0.29px">Add</span></span></div></div>
</div>
<div class="row alt" style="top:514px">
<div class="c inst one"><div><span style="letter-spacing:0.05px">EUR/USD</span></div></div>
<div class="c price" style="left:81.9px;width:160px"><div><span style="letter-spacing:0.55px">Sell 1.1110<i>0</i></span><br><span style="letter-spacing:0.63px">Buy 1.1106<i>3</i></span></div></div>
<div class="c date" style="left:229.9px;width:160px"><div><span style="letter-spacing:0.69px">Aug 12, 2015 9:39</span><br><span style="letter-spacing:0.69px">Aug 12, 2015 9:39</span></div></div>
<div class="c num one" style="left:346.4px;width:160px"><div><span style="letter-spacing:0.77px">5</span></div></div>
<div class="c grn one" style="left:420.8px;width:160px"><div><span style="letter-spacing:0.84px">0.5%</span></div></div>
<div class="c grn one" style="left:510.7px;width:160px"><div><span style="letter-spacing:0.71px">€141.57</span></div></div>
<div class="c grn one" style="left:593.3px;width:160px"><div><span style="letter-spacing:0.64px">3.7</span></div></div>
<div class="c chart one" style="left:716.0px;width:40px"><div><svg class="ci" viewBox="0 0 18 18" width="18" height="18"><defs><linearGradient id="cl" x1="0" y1="0" x2="0" y2="1"><stop offset="0" stop-color="#a9c0e6"/><stop offset="1" stop-color="#4676bd"/></linearGradient><linearGradient id="cr" x1="0" y1="0" x2="0" y2="1"><stop offset="0" stop-color="#b6c9ea"/><stop offset="1" stop-color="#5f88cc"/></linearGradient></defs><rect x="0" y="0" width="18" height="18" fill="#fff"/><rect x="0" y="0" width="18" height="1" fill="#b4c8e8"/><rect x="0" y="0" width="1" height="18" fill="url(#cl)"/><rect x="17" y="0" width="1" height="18" fill="url(#cr)"/><rect x="0" y="17" width="18" height="1" fill="#4474bb"/><rect x="2.7" y="10" width="1" height="5" fill="#cfdcf0"/><rect x="2" y="3" width="2" height="8" rx=".6" fill="#366cbb"/><rect x="5.5" y="6" width="1" height="7" fill="#dde6f5"/><rect x="5" y="7" width="2" height="3" rx=".4" fill="#4a7cc4"/><rect x="9.8" y="3.3" width="1" height="5" fill="#d6d9f0"/><rect x="9" y="8" width="2" height="5" rx=".5" fill="#366cbb"/><rect x="12.7" y="10" width="1" height="5" fill="#cfdcf0"/><rect x="12" y="4.5" width="2" height="6.5" rx=".6" fill="#366cbb"/></svg></div></div>
<div class="c num one" style="left:741.0px;width:160px"><div><span style="letter-spacing:0.69px">€28,722.64</span></div></div>
<div class="c num" style="left:858.1px;width:160px"><div><i><span style="letter-spacing:0.69px">€0.00</span></i><br><span style="letter-spacing:0.70px">-€25.00</span></div></div>
<div class="c dur one" style="left:965.7px;width:160px"><div><span style="letter-spacing:0.64px">1 min</span></div></div>
<div class="c note one" style="left:1092.5px;width:60px"><div><span class="add"><span style="letter-spacing:0.29px">Add</span></span></div></div>
</div>
<div class="row" style="top:557px">
<div class="c inst one"><div><span style="letter-spacing:0.05px">EUR/USD</span></div></div>
<div class="c price" style="left:81.9px;width:160px"><div><span style="letter-spacing:0.39px">Sell 1.1098<i>4</i></span><br><span style="letter-spacing:0.54px">Buy 1.1095<i>0</i></span></div></div>
<div class="c date" style="left:229.9px;width:160px"><div><span style="letter-spacing:0.69px">Aug 12, 2015 9:17</span><br><span style="letter-spacing:0.69px">Aug 12, 2015 9:20</span></div></div>
<div class="c num one" style="left:346.4px;width:160px"><div><span style="letter-spacing:0.77px">1</span></div></div>
<div class="c grn one" style="left:420.8px;width:160px"><div><span style="letter-spacing:0.84px">0.1%</span></div></div>
<div class="c grn one" style="left:510.7px;width:160px"><div><span style="letter-spacing:0.71px">€25.64</span></div></div>
<div class="c grn one" style="left:593.3px;width:160px"><div><span style="letter-spacing:0.64px">3.4</span></div></div>
<div class="c chart one" style="left:716.0px;width:40px"><div><svg class="ci" viewBox="0 0 18 18" width="18" height="18"><defs><linearGradient id="cl" x1="0" y1="0" x2="0" y2="1"><stop offset="0" stop-color="#a9c0e6"/><stop offset="1" stop-color="#4676bd"/></linearGradient><linearGradient id="cr" x1="0" y1="0" x2="0" y2="1"><stop offset="0" stop-color="#b6c9ea"/><stop offset="1" stop-color="#5f88cc"/></linearGradient></defs><rect x="0" y="0" width="18" height="18" fill="#fff"/><rect x="0" y="0" width="18" height="1" fill="#b4c8e8"/><rect x="0" y="0" width="1" height="18" fill="url(#cl)"/><rect x="17" y="0" width="1" height="18" fill="url(#cr)"/><rect x="0" y="17" width="18" height="1" fill="#4474bb"/><rect x="2.7" y="10" width="1" height="5" fill="#cfdcf0"/><rect x="2" y="3" width="2" height="8" rx=".6" fill="#366cbb"/><rect x="5.5" y="6" width="1" height="7" fill="#dde6f5"/><rect x="5" y="7" width="2" height="3" rx=".4" fill="#4a7cc4"/><rect x="9.8" y="3.3" width="1" height="5" fill="#d6d9f0"/><rect x="9" y="8" width="2" height="5" rx=".5" fill="#366cbb"/><rect x="12.7" y="10" width="1" height="5" fill="#cfdcf0"/><rect x="12" y="4.5" width="2" height="6.5" rx=".6" fill="#366cbb"/></svg></div></div>
<div class="c num one" style="left:741.0px;width:160px"><div><span style="letter-spacing:0.69px">€28,581.07</span></div></div>
<div class="c num" style="left:858.1px;width:160px"><div><i><span style="letter-spacing:0.69px">€0.00</span></i><br><span style="letter-spacing:0.69px">-€5.00</span></div></div>
<div class="c dur one" style="left:965.7px;width:160px"><div><span style="letter-spacing:0.64px">3 min</span></div></div>
<div class="c note one" style="left:1092.5px;width:60px"><div><span class="add"><span style="letter-spacing:0.29px">Add</span></span></div></div>
</div>
<div class="row alt" style="top:600px">
<div class="c inst one"><div><span style="letter-spacing:0.05px">EUR/USD</span></div></div>
<div class="c price" style="left:81.9px;width:160px"><div><span style="letter-spacing:0.54px">Buy 1.1089<i>5</i></span><br><span style="letter-spacing:0.39px">Sell 1.1092<i>9</i></span></div></div>
<div class="c date" style="left:229.9px;width:160px"><div><span style="letter-spacing:0.69px">Aug 12, 2015 8:22</span><br><span style="letter-spacing:0.69px">Aug 12, 2015 8:33</span></div></div>
<div class="c num one" style="left:346.4px;width:160px"><div><span style="letter-spacing:0.77px">4</span></div></div>
<div class="c grn one" style="left:420.8px;width:160px"><div><span style="letter-spacing:0.84px">0.4%</span></div></div>
<div class="c grn one" style="left:510.7px;width:160px"><div><span style="letter-spacing:0.71px">€102.60</span></div></div>
<div class="c grn one" style="left:593.3px;width:160px"><div><span style="letter-spacing:0.64px">3.4</span></div></div>
<div class="c chart one" style="left:716.0px;width:40px"><div><svg class="ci" viewBox="0 0 18 18" width="18" height="18"><defs><linearGradient id="cl" x1="0" y1="0" x2="0" y2="1"><stop offset="0" stop-color="#a9c0e6"/><stop offset="1" stop-color="#4676bd"/></linearGradient><linearGradient id="cr" x1="0" y1="0" x2="0" y2="1"><stop offset="0" stop-color="#b6c9ea"/><stop offset="1" stop-color="#5f88cc"/></linearGradient></defs><rect x="0" y="0" width="18" height="18" fill="#fff"/><rect x="0" y="0" width="18" height="1" fill="#b4c8e8"/><rect x="0" y="0" width="1" height="18" fill="url(#cl)"/><rect x="17" y="0" width="1" height="18" fill="url(#cr)"/><rect x="0" y="17" width="18" height="1" fill="#4474bb"/><rect x="2.7" y="10" width="1" height="5" fill="#cfdcf0"/><rect x="2" y="3" width="2" height="8" rx=".6" fill="#366cbb"/><rect x="5.5" y="6" width="1" height="7" fill="#dde6f5"/><rect x="5" y="7" width="2" height="3" rx=".4" fill="#4a7cc4"/><rect x="9.8" y="3.3" width="1" height="5" fill="#d6d9f0"/><rect x="9" y="8" width="2" height="5" rx=".5" fill="#366cbb"/><rect x="12.7" y="10" width="1" height="5" fill="#cfdcf0"/><rect x="12" y="4.5" width="2" height="6.5" rx=".6" fill="#366cbb"/></svg></div></div>
<div class="c num one" style="left:741.0px;width:160px"><div><span style="letter-spacing:0.69px">€28,555.43</span></div></div>
<div class="c num" style="left:858.1px;width:160px"><div><i><span style="letter-spacing:0.69px">€0.00</span></i><br><span style="letter-spacing:0.70px">-€20.00</span></div></div>
<div class="c dur one" style="left:965.7px;width:160px"><div><span style="letter-spacing:0.66px">12 min</span></div></div>
<div class="c note one" style="left:1092.5px;width:60px"><div><span class="add"><span style="letter-spacing:0.29px">Add</span></span></div></div>
</div>
<div class="row" style="top:643px">
<div class="c inst one"><div><span style="letter-spacing:0.05px">EUR/USD</span></div></div>
<div class="c price" style="left:81.9px;width:160px"><div><span style="letter-spacing:0.39px">Sell 1.1079<i>6</i></span><br><span style="letter-spacing:0.54px">Buy 1.1086<i>3</i></span></div></div>
<div class="c date" style="left:229.9px;width:160px"><div><span style="letter-spacing:0.69px">Aug 12, 2015 8:18</span><br><span style="letter-spacing:0.69px">Aug 12, 2015 8:21</span></div></div>
<div class="c num one" style="left:346.4px;width:160px"><div><span style="letter-spacing:0.77px">4</span></div></div>
<div class="c red one" style="left:420.8px;width:160px"><div><span style="letter-spacing:0.61px">-0.9%</span></div></div>
<div class="c red one" style="left:510.7px;width:160px"><div><span style="letter-spacing:0.71px">-€261.74</span></div></div>
<div class="c red one" style="left:593.3px;width:160px"><div><span style="letter-spacing:0.40px">-6.7</span></div></div>
<div class="c chart one" style="left:716.0px;width:40px"><div><svg class="ci" viewBox="0 0 18 18" width="18" height="18"><defs><linearGradient id="cl" x1="0" y1="0" x2="0" y2="1"><stop offset="0" stop-color="#a9c0e6"/><stop offset="1" stop-color="#4676bd"/></linearGradient><linearGradient id="cr" x1="0" y1="0" x2="0" y2="1"><stop offset="0" stop-color="#b6c9ea"/><stop offset="1" stop-color="#5f88cc"/></linearGradient></defs><rect x="0" y="0" width="18" height="18" fill="#fff"/><rect x="0" y="0" width="18" height="1" fill="#b4c8e8"/><rect x="0" y="0" width="1" height="18" fill="url(#cl)"/><rect x="17" y="0" width="1" height="18" fill="url(#cr)"/><rect x="0" y="17" width="18" height="1" fill="#4474bb"/><rect x="2.7" y="10" width="1" height="5" fill="#cfdcf0"/><rect x="2" y="3" width="2" height="8" rx=".6" fill="#366cbb"/><rect x="5.5" y="6" width="1" height="7" fill="#dde6f5"/><rect x="5" y="7" width="2" height="3" rx=".4" fill="#4a7cc4"/><rect x="9.8" y="3.3" width="1" height="5" fill="#d6d9f0"/><rect x="9" y="8" width="2" height="5" rx=".5" fill="#366cbb"/><rect x="12.7" y="10" width="1" height="5" fill="#cfdcf0"/><rect x="12" y="4.5" width="2" height="6.5" rx=".6" fill="#366cbb"/></svg></div></div>
<div class="c num one" style="left:741.0px;width:160px"><div><span style="letter-spacing:0.69px">€28,452.83</span></div></div>
<div class="c num" style="left:858.1px;width:160px"><div><i><span style="letter-spacing:0.69px">€0.00</span></i><br><span style="letter-spacing:0.70px">-€20.00</span></div></div>
<div class="c dur one" style="left:965.7px;width:160px"><div><span style="letter-spacing:0.64px">4 min</span></div></div>
<div class="c note one" style="left:1092.5px;width:60px"><div><span class="add"><span style="letter-spacing:0.29px">Add</span></span></div></div>
</div>
<div class="row alt" style="top:686px">
<div class="c inst one"><div><span style="letter-spacing:0.05px">EUR/USD</span></div></div>
<div class="c price" style="left:81.9px;width:160px"><div><span style="letter-spacing:0.39px">Sell 1.1080<i>5</i></span><br><span style="letter-spacing:0.54px">Buy 1.1078<i>0</i></span></div></div>
<div class="c date" style="left:229.9px;width:160px"><div><span style="letter-spacing:0.69px">Aug 12, 2015 8:13</span><br><span style="letter-spacing:0.69px">Aug 12, 2015 8:15</span></div></div>
<div class="c num one" style="left:346.4px;width:160px"><div><span style="letter-spacing:0.77px">2</span></div></div>
<div class="c grn one" style="left:420.8px;width:160px"><div><span style="letter-spacing:0.84px">0.1%</span></div></div>
<div class="c grn one" style="left:510.7px;width:160px"><div><span style="letter-spacing:0.71px">€35.13</span></div></div>
<div class="c grn one" style="left:593.3px;width:160px"><div><span style="letter-spacing:0.64px">2.5</span></div></div>
<div class="c chart one" style="left:716.0px;width:40px"><div><svg class="ci" viewBox="0 0 18 18" width="18" height="18"><defs><linearGradient id="cl" x1="0" y1="0" x2="0" y2="1"><stop offset="0" stop-color="#a9c0e6"/><stop offset="1" stop-color="#4676bd"/></linearGradient><linearGradient id="cr" x1="0" y1="0" x2="0" y2="1"><stop offset="0" stop-color="#b6c9ea"/><stop offset="1" stop-color="#5f88cc"/></linearGradient></defs><rect x="0" y="0" width="18" height="18" fill="#fff"/><rect x="0" y="0" width="18" height="1" fill="#b4c8e8"/><rect x="0" y="0" width="1" height="18" fill="url(#cl)"/><rect x="17" y="0" width="1" height="18" fill="url(#cr)"/><rect x="0" y="17" width="18" height="1" fill="#4474bb"/><rect x="2.7" y="10" width="1" height="5" fill="#cfdcf0"/><rect x="2" y="3" width="2" height="8" rx=".6" fill="#366cbb"/><rect x="5.5" y="6" width="1" height="7" fill="#dde6f5"/><rect x="5" y="7" width="2" height="3" rx=".4" fill="#4a7cc4"/><rect x="9.8" y="3.3" width="1" height="5" fill="#d6d9f0"/><rect x="9" y="8" width="2" height="5" rx=".5" fill="#366cbb"/><rect x="12.7" y="10" width="1" height="5" fill="#cfdcf0"/><rect x="12" y="4.5" width="2" height="6.5" rx=".6" fill="#366cbb"/></svg></div></div>
<div class="c num one" style="left:741.0px;width:160px"><div><span style="letter-spacing:0.69px">€28,714.57</span></div></div>
<div class="c num" style="left:858.1px;width:160px"><div><i><span style="letter-spacing:0.69px">€0.00</span></i><br><span style="letter-spacing:0.70px">-€10.00</span></div></div>
<div class="c dur one" style="left:965.7px;width:160px"><div><span style="letter-spacing:0.64px">3 min</span></div></div>
<div class="c note one" style="left:1092.5px;width:60px"><div><span class="add"><span style="letter-spacing:0.29px">Add</span></span></div></div>
</div>
<div class="row" style="top:729px">
<div class="c inst one"><div><span style="letter-spacing:0.05px">EUR/USD</span></div></div>
<div class="c price" style="left:81.9px;width:160px"><div><span style="letter-spacing:0.39px">Sell 1.1083<i>0</i></span><br><span style="letter-spacing:0.54px">Buy 1.1079<i>6</i></span></div></div>
<div class="c date" style="left:229.9px;width:160px"><div><span style="letter-spacing:0.69px">Aug 12, 2015 8:02</span><br><span style="letter-spacing:0.69px">Aug 12, 2015 8:07</span></div></div>
<div class="c num one" style="left:346.4px;width:160px"><div><span style="letter-spacing:0.77px">1</span></div></div>
<div class="c grn one" style="left:420.8px;width:160px"><div><span style="letter-spacing:0.84px">0.1%</span></div></div>
<div class="c grn one" style="left:510.7px;width:160px"><div><span style="letter-spacing:0.71px">€25.69</span></div></div>
<div class="c grn one" style="left:593.3px;width:160px"><div><span style="letter-spacing:0.64px">3.4</span></div></div>
<div class="c chart one" style="left:716.0px;width:40px"><div><svg class="ci" viewBox="0 0 18 18" width="18" height="18"><defs><linearGradient id="cl" x1="0" y1="0" x2="0" y2="1"><stop offset="0" stop-color="#a9c0e6"/><stop offset="1" stop-color="#4676bd"/></linearGradient><linearGradient id="cr" x1="0" y1="0" x2="0" y2="1"><stop offset="0" stop-color="#b6c9ea"/><stop offset="1" stop-color="#5f88cc"/></linearGradient></defs><rect x="0" y="0" width="18" height="18" fill="#fff"/><rect x="0" y="0" width="18" height="1" fill="#b4c8e8"/><rect x="0" y="0" width="1" height="18" fill="url(#cl)"/><rect x="17" y="0" width="1" height="18" fill="url(#cr)"/><rect x="0" y="17" width="18" height="1" fill="#4474bb"/><rect x="2.7" y="10" width="1" height="5" fill="#cfdcf0"/><rect x="2" y="3" width="2" height="8" rx=".6" fill="#366cbb"/><rect x="5.5" y="6" width="1" height="7" fill="#dde6f5"/><rect x="5" y="7" width="2" height="3" rx=".4" fill="#4a7cc4"/><rect x="9.8" y="3.3" width="1" height="5" fill="#d6d9f0"/><rect x="9" y="8" width="2" height="5" rx=".5" fill="#366cbb"/><rect x="12.7" y="10" width="1" height="5" fill="#cfdcf0"/><rect x="12" y="4.5" width="2" height="6.5" rx=".6" fill="#366cbb"/></svg></div></div>
<div class="c num one" style="left:741.0px;width:160px"><div><span style="letter-spacing:0.69px">€28,679.44</span></div></div>
<div class="c num" style="left:858.1px;width:160px"><div><i><span style="letter-spacing:0.69px">€0.00</span></i><br><span style="letter-spacing:0.69px">-€5.00</span></div></div>
<div class="c dur one" style="left:965.7px;width:160px"><div><span style="letter-spacing:0.64px">6 min</span></div></div>
<div class="c note one" style="left:1092.5px;width:60px"><div><span class="add"><span style="letter-spacing:0.29px">Add</span></span></div></div>
</div>
<div class="row alt" style="top:772px">
<div class="c inst one"><div><span style="letter-spacing:0.05px">EUR/USD</span></div></div>
<div class="c price" style="left:81.9px;width:160px"><div><span style="letter-spacing:0.39px">Sell 1.1076<i>0</i></span><br><span style="letter-spacing:0.54px">Buy 1.1083<i>3</i></span></div></div>
<div class="c date" style="left:229.9px;width:160px"><div><span style="letter-spacing:0.69px">Aug 12, 2015 7:55</span><br><span style="letter-spacing:0.69px">Aug 12, 2015 7:59</span></div></div>
<div class="c num one" style="left:346.4px;width:160px"><div><span style="letter-spacing:0.77px">1</span></div></div>
<div class="c red one" style="left:420.8px;width:160px"><div><span style="letter-spacing:0.61px">-0.3%</span></div></div>
<div class="c red one" style="left:510.7px;width:160px"><div><span style="letter-spacing:0.70px">-€70.86</span></div></div>
<div class="c red one" style="left:593.3px;width:160px"><div><span style="letter-spacing:0.40px">-7.3</span></div></div>
<div class="c chart one" style="left:716.0px;width:40px"><div><svg class="ci" viewBox="0 0 18 18" width="18" height="18"><defs><linearGradient id="cl" x1="0" y1="0" x2="0" y2="1"><stop offset="0" stop-color="#a9c0e6"/><stop offset="1" stop-color="#4676bd"/></linearGradient><linearGradient id="cr" x1="0" y1="0" x2="0" y2="1"><stop offset="0" stop-color="#b6c9ea"/><stop offset="1" stop-color="#5f88cc"/></linearGradient></defs><rect x="0" y="0" width="18" height="18" fill="#fff"/><rect x="0" y="0" width="18" height="1" fill="#b4c8e8"/><rect x="0" y="0" width="1" height="18" fill="url(#cl)"/><rect x="17" y="0" width="1" height="18" fill="url(#cr)"/><rect x="0" y="17" width="18" height="1" fill="#4474bb"/><rect x="2.7" y="10" width="1" height="5" fill="#cfdcf0"/><rect x="2" y="3" width="2" height="8" rx=".6" fill="#366cbb"/><rect x="5.5" y="6" width="1" height="7" fill="#dde6f5"/><rect x="5" y="7" width="2" height="3" rx=".4" fill="#4a7cc4"/><rect x="9.8" y="3.3" width="1" height="5" fill="#d6d9f0"/><rect x="9" y="8" width="2" height="5" rx=".5" fill="#366cbb"/><rect x="12.7" y="10" width="1" height="5" fill="#cfdcf0"/><rect x="12" y="4.5" width="2" height="6.5" rx=".6" fill="#366cbb"/></svg></div></div>
<div class="c num one" style="left:741.0px;width:160px"><div><span style="letter-spacing:0.69px">€28,653.75</span></div></div>
<div class="c num" style="left:858.1px;width:160px"><div><i><span style="letter-spacing:0.69px">€0.00</span></i><br><span style="letter-spacing:0.69px">-€5.00</span></div></div>
<div class="c dur one" style="left:965.7px;width:160px"><div><span style="letter-spacing:0.64px">5 min</span></div></div>
<div class="c note one" style="left:1092.5px;width:60px"><div><span class="add"><span style="letter-spacing:0.29px">Add</span></span></div></div>
</div>
<div class="vline"></div>
</div></body></html>
